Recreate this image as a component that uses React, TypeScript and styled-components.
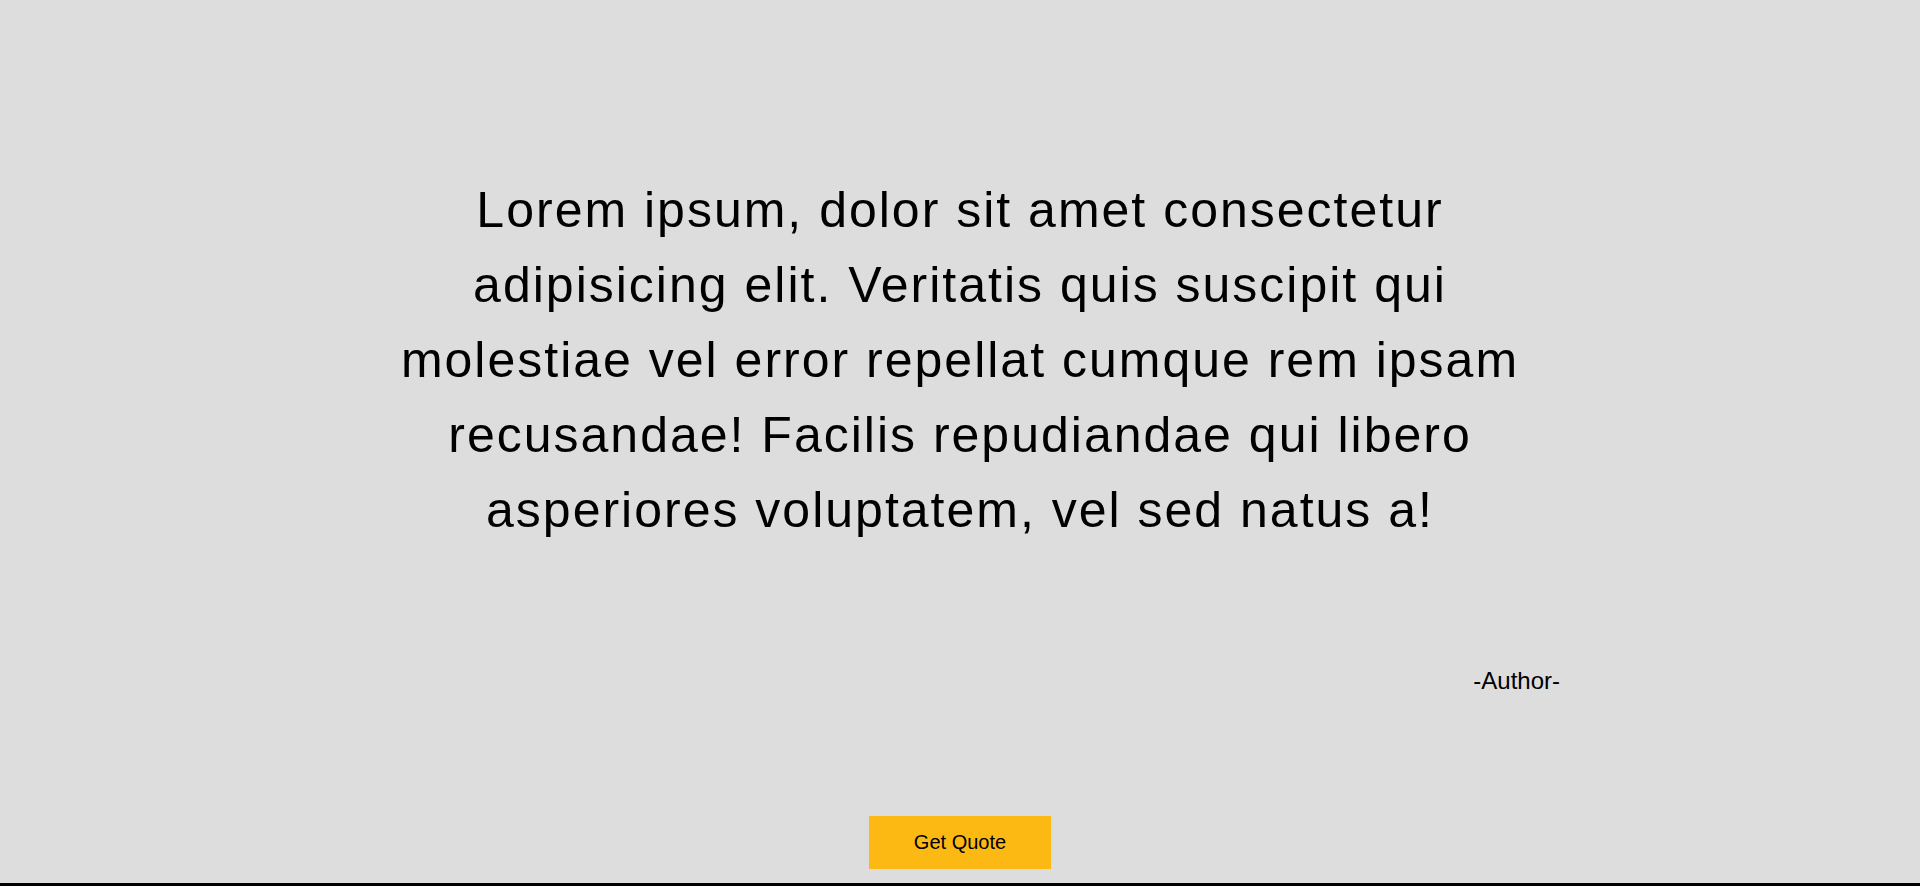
import React from "react";
import styled, { createGlobalStyle } from "styled-components";

const Global = createGlobalStyle`
  html, body {
    margin: 0;
    padding: 0;
    background: #dddddd;
  }
  body {
    font-family: "Liberation Sans", Arial, sans-serif;
    color: #000;
  }
`;

const Page = styled.main`
  box-sizing: border-box;
  height: 886px;
  display: flex;
  flex-direction: column;
  align-items: center;
  border-bottom: 3px solid #000;
  overflow: hidden;
`;

const QuoteBox = styled.section`
  width: 1200px;
  margin-top: 173px;
  display: flex;
  flex-direction: column;
`;

const QuoteText = styled.p`
  margin: 0;
  font-size: 50px;
  line-height: 75px;
  letter-spacing: 2px;
  text-align: center;
`;

const Author = styled.p`
  margin: 119px 0 0;
  font-size: 24px;
  text-align: right;
`;

const QuoteButton = styled.button`
  margin-top: 121px;
  width: 182px;
  height: 53px;
  border: none;
  background: #fdb913;
  color: #000;
  font-family: "Liberation Sans", Arial, sans-serif;
  font-size: 20px;
  cursor: pointer;
`;

export default function App() {
  return (
    <>
      <Global />
      <Page>
        <QuoteBox>
          <QuoteText>
            Lorem ipsum, dolor sit amet consectetur adipisicing elit. Veritatis
            quis suscipit qui molestiae vel error repellat cumque rem ipsam
            recusandae! Facilis repudiandae qui libero asperiores voluptatem,
            vel sed natus a!
          </QuoteText>
          <Author>-Author-</Author>
        </QuoteBox>
        <QuoteButton>Get Quote</QuoteButton>
      </Page>
    </>
  );
}
